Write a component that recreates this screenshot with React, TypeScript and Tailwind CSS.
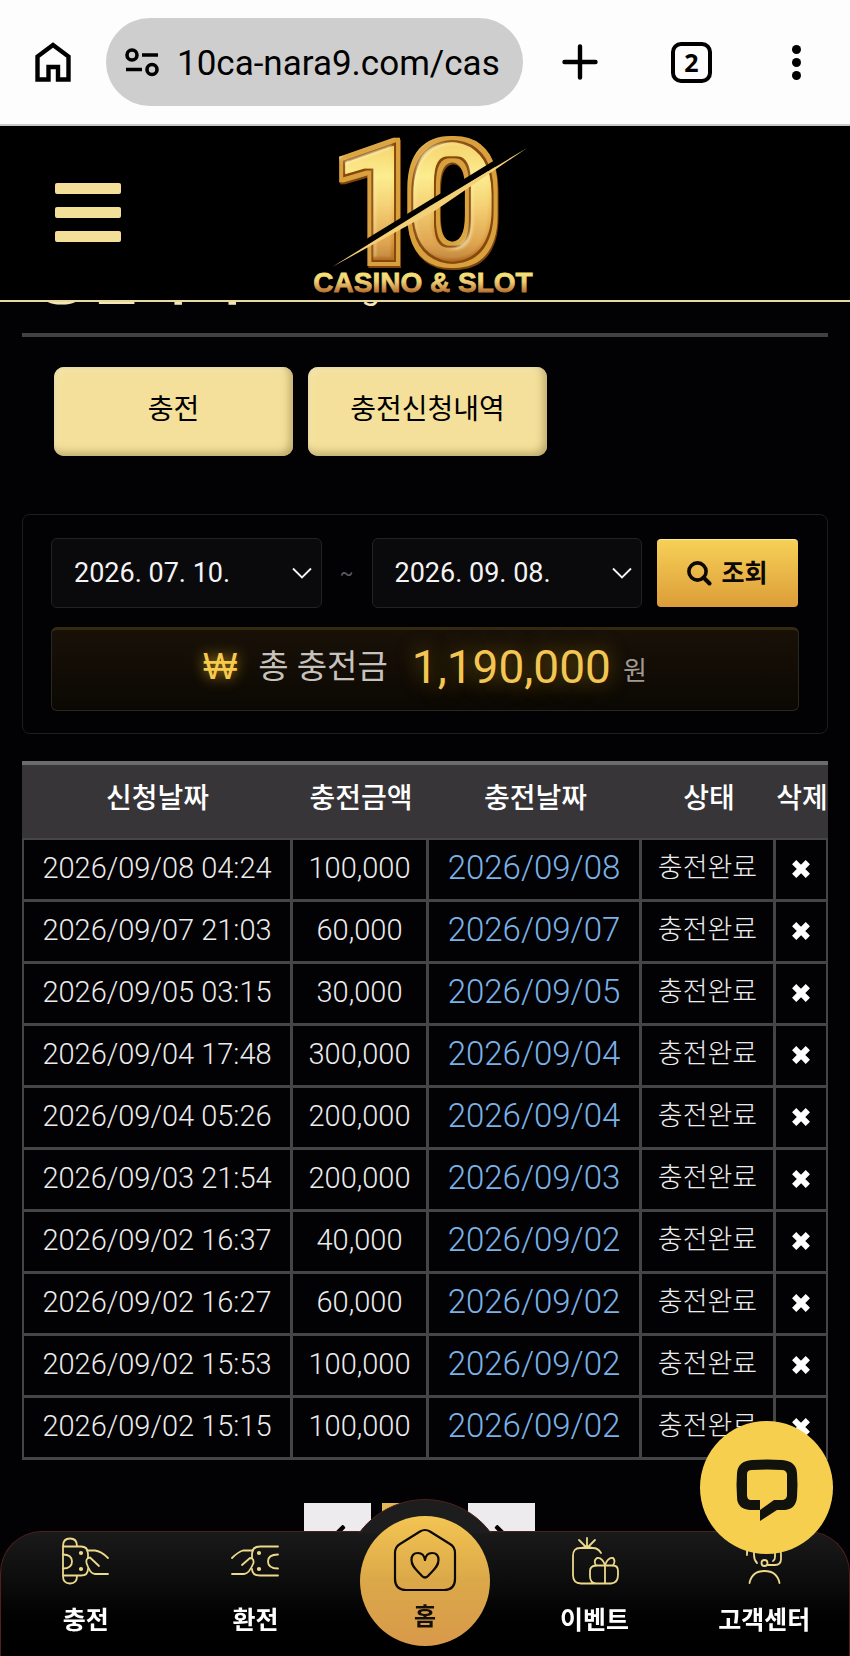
import React from "react";
import { FaChevronLeft, FaChevronRight } from "react-icons/fa";

type Deposit = { requested: string; amount: string; completed: string };

const deposits: Deposit[] = [
  { requested: "2026/09/08 04:24", amount: "100,000", completed: "2026/09/08" },
  { requested: "2026/09/07 21:03", amount: "60,000", completed: "2026/09/07" },
  { requested: "2026/09/05 03:15", amount: "30,000", completed: "2026/09/05" },
  { requested: "2026/09/04 17:48", amount: "300,000", completed: "2026/09/04" },
  { requested: "2026/09/04 05:26", amount: "200,000", completed: "2026/09/04" },
  { requested: "2026/09/03 21:54", amount: "200,000", completed: "2026/09/03" },
  { requested: "2026/09/02 16:37", amount: "40,000", completed: "2026/09/02" },
  { requested: "2026/09/02 16:27", amount: "60,000", completed: "2026/09/02" },
  { requested: "2026/09/02 15:53", amount: "100,000", completed: "2026/09/02" },
  { requested: "2026/09/02 15:15", amount: "100,000", completed: "2026/09/02" },
];

function BrowserBar() {
  return (
    <div className="flex h-[126px] items-center border-b-2 border-[#c9c9c9] bg-[#fdfdfd] text-black">
      <button aria-label="홈 화면" className="ml-[34px] shrink-0">
        <svg viewBox="0 0 38 42" className="h-[42px] w-[38px]" fill="none" stroke="currentColor" strokeWidth="4.4">
          <path d="M3.500 38.500V15.500L19 4L34.500 15.500V38.500H24V26H14.500V38.500Z" />
        </svg>
      </button>
      <div className="ml-[34px] flex h-[88px] min-w-0 flex-1 items-center rounded-full bg-[#cecece] pl-[18px]">
        <svg viewBox="0 0 36 30" className="h-[30px] w-[36px] shrink-0" fill="none" stroke="currentColor" strokeWidth="3.6">
          <circle cx="8" cy="8" r="5" />
          <path d="M18 8H34M2 22.500H18" />
          <circle cx="28" cy="22.500" r="5" />
        </svg>
        <input
          aria-label="주소"
          readOnly
          value="10ca-nara9.com/cas"
          className="ml-[17px] w-full min-w-0 bg-transparent pt-[4px] text-[35px] outline-none"
        />
      </div>
      <button aria-label="새 탭" className="ml-[39px] shrink-0">
        <svg viewBox="0 0 36 36" className="h-[36px] w-[36px]" stroke="currentColor" strokeWidth="4.400" strokeLinecap="round">
          <path d="M18 2.500V33.500M2.500 18H33.500" />
        </svg>
      </button>
      <button
        aria-label="탭 2개"
        className="ml-[73px] flex h-[41px] w-[41px] shrink-0 items-center justify-center rounded-[10px] border-4 border-black font-['Noto_Sans'] text-[25px] leading-none font-bold"
      >
        2
      </button>
      <button aria-label="메뉴" className="mr-[49px] ml-[80px] flex shrink-0 flex-col gap-[4px]">
        <span className="h-[9px] w-[9px] rounded-full bg-black" />
        <span className="h-[9px] w-[9px] rounded-full bg-black" />
        <span className="h-[9px] w-[9px] rounded-full bg-black" />
      </button>
    </div>
  );
}

function Logo() {
  return (
    <svg viewBox="300 126 250 174" className="h-[174px] w-[250px]" role="img" aria-label="10 Casino & Slot">
      <defs>
        <linearGradient id="face" x1="0" y1="138" x2="0" y2="266" gradientUnits="userSpaceOnUse">
          <stop offset="0" stopColor="#f3cb5c" />
          <stop offset="0.3" stopColor="#fdf08c" />
          <stop offset="0.55" stopColor="#f3cb68" />
          <stop offset="0.85" stopColor="#d8933a" />
          <stop offset="1" stopColor="#b06a20" />
        </linearGradient>
        <linearGradient id="word" x1="0" y1="270" x2="0" y2="293" gradientUnits="userSpaceOnUse">
          <stop offset="0" stopColor="#f8e878" />
          <stop offset="0.5" stopColor="#f0cf74" />
          <stop offset="1" stopColor="#b4692a" />
        </linearGradient>
        <filter id="bevel" x="-5%" y="-5%" width="110%" height="110%" colorInterpolationFilters="sRGB">
          <feMorphology in="SourceAlpha" operator="dilate" radius="2" result="wide" />
          <feOffset in="wide" dx="1" dy="2" result="shadow" />
          <feFlood floodColor="#7d4311" result="brown" />
          <feComposite in="brown" in2="shadow" operator="in" result="edge" />
          <feFlood floodColor="#d9a13c" result="gold" />
          <feComposite in="gold" in2="wide" operator="in" result="rim" />
          <feMorphology in="SourceAlpha" operator="erode" radius="2" result="narrow" />
          <feFlood floodColor="#85470f" result="bronze" />
          <feComposite in="bronze" in2="narrow" operator="in" result="groove" />
          <feMorphology in="SourceGraphic" operator="erode" radius="4" result="inner" />
          <feGaussianBlur in="SourceAlpha" stdDeviation="3" result="soft" />
          <feSpecularLighting in="soft" surfaceScale="5" specularConstant="0.8" specularExponent="18" lightingColor="#fff3b8" result="light">
            <feDistantLight azimuth="225" elevation="45" />
          </feSpecularLighting>
          <feComposite in="light" in2="wide" operator="in" result="sheen" />
          <feMerge>
            <feMergeNode in="edge" />
            <feMergeNode in="rim" />
            <feMergeNode in="groove" />
            <feMergeNode in="inner" />
            <feMergeNode in="sheen" />
          </feMerge>
        </filter>
      </defs>
      <text
        x="327 402"
        y="264"
        fontFamily="Roboto, sans-serif"
        fontWeight="900"
        fontSize="174"
        fill="url(#face)"
        filter="url(#bevel)"
      >
        10
      </text>
      <path d="M346 255L512 153" stroke="#000" strokeWidth="6" />
      <path d="M332 267L430 206L527 148L436 210Z" fill="#f3cf78" />
      <text
        x="423"
        y="292"
        textAnchor="middle"
        fontFamily="'Liberation Sans', sans-serif"
        fontWeight="700"
        fontSize="28"
        fill="url(#word)"
        stroke="url(#word)"
        strokeWidth="0.8"
      >
        CASINO &amp; SLOT
      </text>
    </svg>
  );
}

function SiteHeader() {
  return (
    <header className="relative flex h-[176px] items-center justify-center border-b-2 border-[#e8d9a0] bg-black">
      <button aria-label="전체 메뉴" className="absolute left-[55px] flex w-[66px] flex-col gap-[13px] pb-[2px]">
        <span className="h-[11px] rounded-[2px] bg-[#f4df98]" />
        <span className="h-[11px] rounded-[2px] bg-[#f4df98]" />
        <span className="h-[11px] rounded-[2px] bg-[#f4df98]" />
      </button>
      <a href="#home">
        <Logo />
      </a>
    </header>
  );
}

function DateSelect({ label, value }: { label: string; value: string }) {
  return (
    <label className="relative flex min-w-0 flex-1 items-center">
      <span className="sr-only">{label}</span>
      <select
        defaultValue={value}
        className="h-[70px] w-full appearance-none rounded-[6px] border border-[#222225] bg-[#0a090c] pl-[22px] text-[27px] text-[#f4f4f4]"
      >
        <option>{value}</option>
      </select>
      <svg
        viewBox="0 0 20 12"
        className="pointer-events-none absolute right-[10px] h-[12px] w-[20px]"
        fill="none"
        stroke="#f4f4f4"
        strokeWidth="1.8"
      >
        <path d="M1 1.500L10 10.500L19 1.500" />
      </svg>
    </label>
  );
}

function SearchPanel() {
  return (
    <section className="mx-[22px] mt-[58px] flex flex-col gap-[19px] rounded-[8px] border border-[#1d1d20] px-[28px] pt-[23px] pb-[22px]">
      <form className="flex items-center" onSubmit={(e) => e.preventDefault()}>
        <DateSelect label="시작일" value="2026. 07. 10." />
        <span className="w-[50px] text-center text-[20px] text-[#5c5c60]">~</span>
        <DateSelect label="종료일" value="2026. 09. 08." />
        <button className="mr-px ml-[15px] flex h-[68px] w-[141px] items-center justify-center gap-[9px] rounded-[4px] border-t border-[#fbe9a4] bg-linear-to-b from-[#f6d057] to-[#dc9d38] text-[25px] font-bold text-[#0b0805]">
          <svg viewBox="0 0 25 25" className="h-[25px] w-[25px]" fill="none" stroke="currentColor" strokeWidth="3.6">
            <circle cx="10.500" cy="10.500" r="8.600" />
            <path d="M16.500 16.500L22.500 22.500" strokeWidth="4" strokeLinecap="round" />
          </svg>
          조회
        </button>
      </form>
      <div className="flex h-[84px] items-center justify-center rounded-[6px] border border-t-[3px] border-[#2a281c] border-t-[#332a10] bg-linear-to-b from-[#191108] to-[#0b0803] pb-[6px] leading-[72px]">
        <span className="font-['Liberation_Sans'] text-[36px] text-[#f7c94c] [text-shadow:0_0_14px_#a8801c]">₩</span>
        <span className="ml-[21px] text-[33px] text-[#c6c2bd]">총 충전금</span>
        <span className="ml-[24px] text-[46px] text-[#f3c653] [text-shadow:0_0_20px_#7a5f14]">1,190,000</span>
        <span className="ml-[12px] pt-[8px] text-[26px] text-[#a19a92]">원</span>
      </div>
    </section>
  );
}

function DepositTable() {
  const th = "h-[79px] pb-[6px] text-[28px] font-medium whitespace-nowrap";
  const td =
    "h-[62px] border-r-[3px] border-b-[3px] border-[#454447] p-0 pb-[4px] text-center whitespace-nowrap first:border-l-2 last:border-r-2";
  return (
    <table className="mx-[22px] mt-[27px] w-[calc(100%-44px)] table-fixed border-separate border-spacing-0 text-[29px] leading-[40px] font-light text-[#ececec]">
      <colgroup>
        <col className="w-[271px]" />
        <col className="w-[136px]" />
        <col className="w-[213px]" />
        <col className="w-[134px]" />
        <col />
      </colgroup>
      <thead className="bg-[#373538] text-white">
        <tr>
          {["신청날짜", "충전금액", "충전날짜", "상태", "삭제"].map((h) => (
            <th key={h} className={`${th} border-t-4 border-b-2 border-t-[#6b6a6d] border-b-[#454447]`}>
              {h}
            </th>
          ))}
        </tr>
      </thead>
      <tbody>
        {deposits.map((d) => (
          <tr key={d.requested}>
            <td className={td}>{d.requested}</td>
            <td className={td}>{d.amount}</td>
            <td className={td}>
              <a href="#detail" className="inline-block pt-[2px] text-[33px] text-[#7ab2e8]">
                {d.completed}
              </a>
            </td>
            <td className={`${td} text-[27px]`}>충전완료</td>
            <td className={td}>
              <button aria-label="삭제" className="inline-flex">
                <svg viewBox="0 0 18 18" className="h-[18px] w-[18px]" stroke="#fff" strokeWidth="6" strokeLinecap="square">
                  <path d="M4.300 4.300L13.700 13.700M13.700 4.300L4.300 13.700" />
                </svg>
              </button>
            </td>
          </tr>
        ))}
      </tbody>
    </table>
  );
}

function Pagination() {
  return (
    <nav aria-label="페이지" className="mt-[43px] flex justify-center gap-[11px] pr-[11px]">
      <button aria-label="이전" className="flex h-[67px] w-[67px] items-center justify-center bg-[#eeebee] text-black">
        <FaChevronLeft className="h-[28px] w-[28px]" />
      </button>
      <button className="mr-[8px] h-[67px] w-[67px] bg-[#e3b65a] text-[28px] text-black">1</button>
      <button aria-label="다음" className="flex h-[67px] w-[67px] items-center justify-center bg-[#eeebee] text-black">
        <FaChevronRight className="h-[28px] w-[28px]" />
      </button>
    </nav>
  );
}

const iconProps = {
  viewBox: "0 0 48 48",
  className: "h-[48px] w-[48px]",
  fill: "none",
  stroke: "#ecd98a",
  strokeWidth: 1.8,
  strokeLinecap: "round" as const,
  strokeLinejoin: "round" as const,
};

function DepositIcon() {
  return (
    <svg {...iconProps}>
      <path d="M1 9Q1 1.500 8 1.500Q15 1.500 15 9M1 9V39Q1 46.500 8 46.500Q15 46.500 15 39M1 9.500H19Q26 9.500 26 17V21M1 38.500H19Q26 38.500 26 32" />
      <path d="M1 17.500Q10 17.500 10 24.500Q10 31.500 1 31.500" />
      <path d="M25 13.500H33Q39 14 46 21M37 29L28 20.500Q23.500 21 24.500 26Q28 37 33 37H46" />
      <circle cx="19" cy="16" r="1.200" fill="#ecd98a" />
      <circle cx="19" cy="32" r="1.200" fill="#ecd98a" />
    </svg>
  );
}

function WithdrawIcon() {
  return (
    <svg {...iconProps}>
      <path d="M47 9.500H29Q21 9.500 21 17V21M47 38.500H29Q21 38.500 21 32" />
      <path d="M47 17.500Q37 17.500 37 24.500Q37 31.500 47 31.500" />
      <path d="M22 13.500H12Q7 15 1 21M11 28L19 21Q23 21 22.500 26Q18 37 13 37H1" />
      <circle cx="28" cy="16" r="1.200" fill="#ecd98a" />
      <circle cx="28" cy="32" r="1.200" fill="#ecd98a" />
    </svg>
  );
}

function GiftIcon() {
  return (
    <svg {...iconProps}>
      <path d="M16 11L8 3M16 11V1M16 11L24 3M12 10.500H20" />
      <path d="M30 16Q27 11 22 11H9Q2 11 2 19V38Q2 46.500 10 46.500H40Q47 46 47 38V34Q47 28.500 42 28.500H25Q19 29 19 34V39Q19 46 25 46.500M34 29V46" />
      <path d="M34 28Q31 20 26 21Q22 24 25 28.500M34 28Q37 20 42 21Q45 24 42 28.500" />
    </svg>
  );
}

function SupportIcon() {
  return (
    <svg {...iconProps}>
      <path d="M7 18Q7 2 24 2Q41 2 41 18V22Q41 28 35 28H28M7 18V14M14 14V18Q14 23 17 26M35 14V20Q35 23 33 24" />
      <circle cx="24.500" cy="26" r="3" />
      <path d="M9.500 46Q12 34 24.500 34Q37 34 39.500 46" />
    </svg>
  );
}

function NavItem({ label, children }: { label: string; children: React.ReactNode }) {
  return (
    <a href="#menu" className="flex flex-1 flex-col items-center gap-[18px] pt-[5px] text-[25px] leading-[36px] font-bold text-white">
      {children}
      {label}
    </a>
  );
}

function BottomNav() {
  return (
    <nav
      aria-label="하단 메뉴"
      className="fixed inset-x-0 bottom-0 flex h-[125px] rounded-t-[42px] border border-b-0 border-[#4d211d] bg-linear-to-b from-[#1a1a1a] via-[#0a090a] via-50% to-black"
    >
      <div className="pointer-events-none absolute inset-x-0 top-[-33px] flex h-[34px] justify-center overflow-hidden">
        <div className="h-[164px] w-[164px] shrink-0 rounded-full border border-[#4d211d] bg-[#1e1d1e]" />
      </div>
      <NavItem label="충전">
        <DepositIcon />
      </NavItem>
      <NavItem label="환전">
        <WithdrawIcon />
      </NavItem>
      <div className="flex flex-1 justify-center">
        <a
          href="#home"
          className="relative -mt-[16px] flex h-[130px] w-[130px] shrink-0 flex-col items-center rounded-full bg-linear-to-b from-[#f3c552] via-[#dba849] to-[#d8994a] pt-[12px] text-[24px] leading-[36px] font-bold text-[#15100a]"
        >
          <svg
            viewBox="0 0 64 64"
            className="h-[64px] w-[64px]"
            fill="none"
            stroke="#0d0903"
            strokeWidth="2.200"
            strokeLinejoin="round"
          >
            <path d="M27 3.500Q32 0.500 37 3.500L57 16Q62 19 62 25V51Q62 62 51 62H13Q2 62 2 51V25Q2 19 7 16Z" />
            <path d="M32 32Q31 25 25 25Q18.500 25 18.500 32C18.500 39 24 42 29 48Q32 51 35 48C40 42 45.500 39 45.500 32Q45.500 25 39 25Q33 25 32 32Z" />
          </svg>
          <span className="mt-[7px]">홈</span>
        </a>
      </div>
      <NavItem label="이벤트">
        <GiftIcon />
      </NavItem>
      <NavItem label="고객센터">
        <SupportIcon />
      </NavItem>
    </nav>
  );
}

function ChatButton() {
  return (
    <button
      aria-label="채팅 상담"
      className="fixed right-[17px] bottom-[102px] flex h-[133px] w-[133px] items-center justify-center rounded-full bg-[#f7cf4f]"
    >
      <svg viewBox="0 0 62 62" className="mt-[4px] h-[62px] w-[62px]">
        <path
          fill="#12120d"
          fillRule="evenodd"
          d="M16 1Q31 0 46 1Q60 2 61 14Q62 26 61 38Q60 50 49 51H41L24 62V51H14Q1 50 1 38Q0 26 1 14Q2 2 16 1ZM16 11Q31 10 46 11Q50 11 51 15V36Q51 40 47 41H38L24 51V41H15Q11 41 11 36V15Q11 11 16 11Z"
        />
      </svg>
    </button>
  );
}

export default function App() {
  return (
    <div className="min-h-screen bg-[#020103] font-[Roboto,'Noto_Sans_CJK_KR',sans-serif]">
      <BrowserBar />
      <SiteHeader />
      <main>
        <div className="mx-[22px] flex h-[35px] items-end overflow-hidden border-b-4 border-[#414042] pb-[14px] pl-[14px] whitespace-nowrap text-[#f4e6b4]">
          <h1 className="text-[56px] leading-[64px] font-bold">
            충전하기 <span className="text-[34px] font-normal">Recharge</span>
          </h1>
        </div>
        <div className="mt-[30px] flex gap-[15px] px-[54px]">
          {["충전", "충전신청내역"].map((label) => (
            <button
              key={label}
              className="h-[89px] w-[239px] rounded-[10px] bg-[#f4e09a] pb-[4px] text-[28px] text-black shadow-[inset_-3px_-3px_8px_#b9a468,inset_2px_2px_6px_#fbefc0]"
            >
              {label}
            </button>
          ))}
        </div>
        <SearchPanel />
        <DepositTable />
        <Pagination />
      </main>
      <BottomNav />
      <ChatButton />
    </div>
  );
}
